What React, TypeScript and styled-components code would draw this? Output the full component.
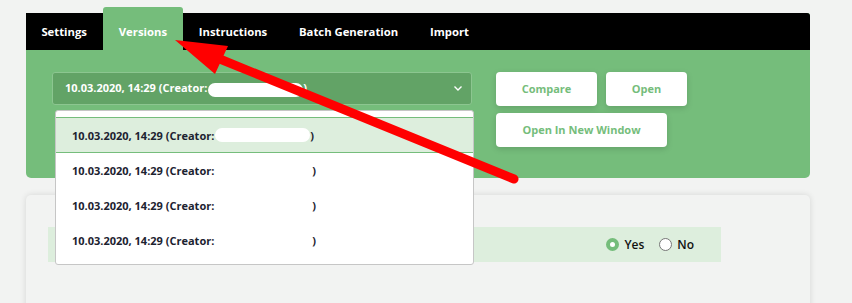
import React from "react";
import styled, { createGlobalStyle } from "styled-components";

const GlobalStyle = createGlobalStyle`
	html, body {
		margin: 0;
		padding: 0;
		background: #f2f3f2;
		font-family: "Open Sans", "Liberation Sans", sans-serif;
	}
`

const Page = styled.div`
	position: relative;
	width: 852px;
	height: 303px;
	overflow: hidden;
	padding: 13px 0 0 26px;
	box-sizing: border-box;
`
const Panel = styled.section`
	width: 784px;
	border-radius: 0 3px 5px 5px;
	background: #75bd7b;
`
const TabBar = styled.nav`
	display: flex;
	align-items: flex-end;
	height: 37px;
	background: #000;
	border-radius: 0 3px 0 0;
`
const Tab = styled.div<{ active?: boolean }>`
	display: flex;
	align-items: center;
	justify-content: center;
	height: ${p => p.active ? "43px" : "37px"};
	padding: 0 16.4px 0 15.4px;
	padding-top: ${p => p.active ? "5px" : "0"};
	background: ${p => p.active ? "#75bd7b" : "transparent"};
	border-radius: ${p => p.active ? "3px 3px 0 0" : "0"};
	color: #fff;
	font-size: 11.3px;
	font-weight: 700;
	box-sizing: border-box;
`
const Body = styled.div`
	display: flex;
	gap: 24px;
	padding: 22px 26px 31px 26px;
`
const SelectWrap = styled.div`
	position: relative;
	width: 420px;
`
const Select = styled.div`
	display: flex;
	align-items: center;
	justify-content: space-between;
	height: 33px;
	padding: 0 8px 0 12px;
	box-sizing: border-box;
	background: #62a366;
	border: 1px solid #8cc690;
	border-radius: 3px;
	color: #fff;
	font-size: 11px;
	font-weight: 700;
`
const Pill = styled.span<{ filled?: boolean }>`
	display: inline-block;
	width: ${p => p.filled ? "95px" : "97px"};
	height: 14px;
	margin-left: 1px;
	vertical-align: middle;
	border-radius: 7px;
	background: ${p => p.filled ? "#fff" : "transparent"};
`
const Menu = styled.div`
	position: absolute;
	top: 38px;
	left: 3px;
	width: 419px;
	box-sizing: border-box;
	padding: 6px 0;
	background: #fff;
	border: 1px solid #c6c6c6;
	border-radius: 3px;
	z-index: 2;
`
const Item = styled.div<{ active?: boolean }>`
	display: flex;
	align-items: center;
	height: ${p => p.active ? "34px" : "35px"};
	padding-left: 16px;
	background: ${p => p.active ? "#ddeedd" : "#fff"};
	border-top: ${p => p.active ? "1px solid #75bd7b" : "none"};
	border-bottom: ${p => p.active ? "1px solid #75bd7b" : "none"};
	color: #1c2230;
	font-size: 11px;
	font-weight: 700;
`
const Buttons = styled.div`
	display: flex;
	flex-wrap: wrap;
	align-content: flex-start;
	gap: 7px 9px;
	width: 200px;
`
const Button = styled.button<{ w: number }>`
	width: ${p => p.w}px;
	height: 34px;
	padding: 0 0 1px;
	border: none;
	border-radius: 4px;
	background: #fff;
	color: #75bd7b;
	font-family: "Open Sans", "Liberation Sans", sans-serif;
	font-size: 11px;
	font-weight: 700;
	box-shadow: 0 2px 6px rgba(0, 0, 0, 0.15);
`
const Panel2 = styled.section`
	margin-top: 17px;
	width: 784px;
	height: 140px;
	padding: 32px 89px 0 22px;
	box-sizing: border-box;
	background: #f2f3f2;
	border-radius: 5px;
	box-shadow: 0 0 6px rgba(0, 0, 0, 0.12);
`
const Strip = styled.div`
	display: flex;
	align-items: center;
	justify-content: flex-end;
	height: 35px;
	padding-right: 27px;
	background: #ddeedd;
	font-size: 12px;
	font-weight: 600;
	color: #111;
`
const RadioLabel = styled.label`
	display: flex;
	align-items: center;
	gap: 5px;
	margin-left: 15px;
`
const Radio = styled.span<{ checked?: boolean }>`
	width: 13px;
	height: 13px;
	border-radius: 50%;
	box-sizing: border-box;
	background: #fff;
	border: ${p => p.checked ? "4px solid #75bd7b" : "1px solid #777"};
`
const Arrow = styled.svg`
	position: absolute;
	left: 0;
	top: 0;
	pointer-events: none;
	z-index: 5;
`

const rows = [true, false, false, false];

export default function App() {
	return (
		<Page>
			<GlobalStyle />
			<Panel>
				<TabBar>
					<Tab>Settings</Tab>
					<Tab active>Versions</Tab>
					<Tab>Instructions</Tab>
					<Tab>Batch Generation</Tab>
					<Tab>Import</Tab>
				</TabBar>
				<Body>
					<SelectWrap>
						<Select>
							<span>10.03.2020, 14:29 (Creator:<Pill filled />)</span>
							<svg width="10" height="7" viewBox="0 0 10 7">
								<path d="M1.5 1.5 L5 5 L8.5 1.5" stroke="#fff" strokeWidth="1.4" fill="none" />
							</svg>
						</Select>
						<Menu>
							{rows.map((a, i) => (
								<Item key={i} active={a}>
									10.03.2020, 14:29 (Creator:<Pill filled={a} />)
								</Item>
							))}
						</Menu>
					</SelectWrap>
					<Buttons>
						<Button w={101}>Compare</Button>
						<Button w={81}>Open</Button>
						<Button w={171}>Open In New Window</Button>
					</Buttons>
				</Body>
			</Panel>
			<Panel2>
				<Strip>
					<RadioLabel><Radio checked />Yes</RadioLabel>
					<RadioLabel><Radio />No</RadioLabel>
				</Strip>
			</Panel2>
			<Arrow width="852" height="303" viewBox="0 0 852 303">
				<line x1="514" y1="179" x2="210" y2="55" stroke="#ff0000" strokeWidth="9" strokeLinecap="round" />
				<polygon points="175,40 228,46 215,74" fill="#ff0000" />
			</Arrow>
		</Page>
	);
}
